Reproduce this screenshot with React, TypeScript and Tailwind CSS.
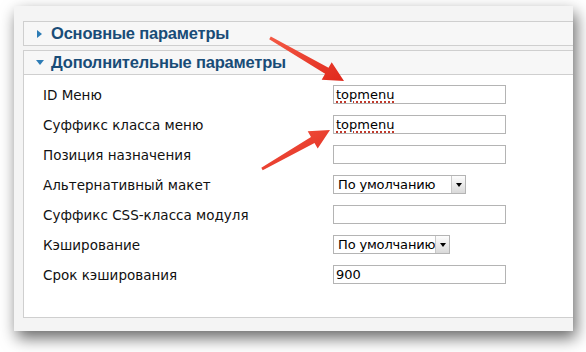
const rows = [
  { label: "ID Меню", kind: "input", value: "topmenu", spell: true },
  { label: "Суффикс класса меню", kind: "input", value: "topmenu", spell: true },
  { label: "Позиция назначения", kind: "input", value: "" },
  { label: "Альтернативный макет", kind: "select", value: "По умолчанию", width: "w-[133px]" },
  { label: "Суффикс CSS-класса модуля", kind: "input", value: "" },
  { label: "Кэширование", kind: "select", value: "По умолчанию", width: "w-[117px]" },
  { label: "Срок кэширования", kind: "input", value: "900" },
];

function Select({ value, width }: { value: string; width?: string }) {
  return (
    <div className={`flex h-[19px] items-stretch border border-[#b4b4b4] bg-white ${width}`}>
      <span className="flex-1 overflow-hidden whitespace-nowrap pl-[4px] text-[13px] leading-[17px] tracking-[-0.15px] text-black">
        {value}
      </span>
      <span className="flex w-[14px] items-center justify-center border-l border-[#c8c8c8] bg-gradient-to-b from-[#fdfdfd] to-[#d9d9d9]">
        <span className="h-0 w-0 border-x-[3px] border-t-[4px] border-x-transparent border-t-black" />
      </span>
    </div>
  );
}

function Header({ title, open }: { title: string; open?: boolean }) {
  return (
    <div className="flex h-[25px] items-center border-y border-l border-[#cfcfcf] bg-[#f7f7f7] pl-[12px]">
      {open ? (
        <span className="mr-[7px] h-0 w-0 border-x-[4px] border-t-[5px] border-x-transparent border-t-[#2d7cb5]" />
      ) : (
        <span className="mr-[9px] ml-[1px] h-0 w-0 border-y-[4px] border-l-[5px] border-y-transparent border-l-[#2d7cb5]" />
      )}
      <span className="text-[16.5px] font-bold tracking-[-0.2px] text-[#194c77]">{title}</span>
    </div>
  );
}

export default function App() {
  return (
    <div className="relative h-[352px] w-[586px] overflow-hidden bg-white font-['DejaVu_Sans',sans-serif]">
      <div className="ml-[14px] mt-[6px] h-[325px] w-[559px] overflow-hidden bg-[#f4f4f4] pl-[9px] pt-[15px] shadow-[3px_7px_15px_rgba(0,0,0,0.6)]">
        <div className="w-[600px]">
          <div className="font-['Liberation_Sans',sans-serif]">
            <Header title="Основные параметры" />
            <div className="h-[4px]" />
            <Header title="Дополнительные параметры" open />
          </div>
          <div className="h-[243px] border-b border-l border-[#cfcfcf] bg-white pt-[10px]">
            {rows.map((r, i) => (
              <div key={i} className="flex h-[30px] items-start">
                <span className="w-[309px] pl-[19px] pt-[1px] text-[13.5px] leading-[18px] text-[#111]">
                  {r.label}
                </span>
                {r.kind === "input" ? (
                  <div className="h-[19px] w-[173px] border border-[#b4b4b4] bg-white pl-[2px] text-[13px] leading-[17px] text-black">
                    {r.spell ? (
                      <span className="underline decoration-[#c0392b] decoration-dotted decoration-2 underline-offset-[2px]">
                        {r.value}
                      </span>
                    ) : (
                      r.value
                    )}
                  </div>
                ) : (
                  <Select value={r.value} width={r.width} />
                )}
              </div>
            ))}
          </div>
        </div>
      </div>

      <svg className="pointer-events-none absolute left-0 top-0" width="586" height="352">
        <defs>
          <linearGradient id="ar" x1="0" y1="0" x2="1" y2="1">
            <stop offset="0" stopColor="#f45a45" />
            <stop offset="1" stopColor="#e0281c" />
          </linearGradient>
        </defs>
        <polygon
          points="270.8,36.6 328.5,67.7 331.7,62.2 344,81 321.7,79.7 325.1,73.7 269.2,39.2"
          fill="url(#ar)"
        />
        <polygon
          points="261.3,167.7 311.0,136.9 307.7,131.2 330,130 317.7,148.6 314.5,142.9 262.7,170.3"
          fill="url(#ar)"
        />
      </svg>
    </div>
  );
}
